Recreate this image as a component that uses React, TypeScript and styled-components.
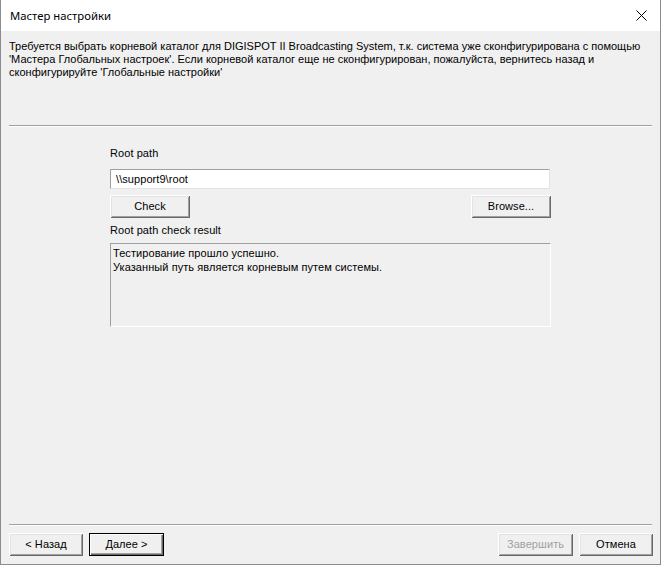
import React from "react";
import styled, { createGlobalStyle } from "styled-components";

const Global = createGlobalStyle`
  html, body { margin: 0; padding: 0; background: #ffffff; }
  * { box-sizing: border-box; }
`;

const Window = styled.div`
  width: 661px;
  height: 565px;
  border: 1px solid #8c8c8c;
  border-top: none;
  display: flex;
  flex-direction: column;
  font-family: "Liberation Sans", Arial, sans-serif;
  font-size: 11px;
  letter-spacing: 0.07px;
  color: #000;
`;

const TitleBar = styled.div`
  height: 31px;
  background: #ffffff;
  display: flex;
  align-items: center;
  justify-content: space-between;
  padding: 0 13px 1px 9px;
  font-family: "Noto Sans", "Open Sans", sans-serif;
  font-size: 11.3px;
  letter-spacing: 0;
  color: #000;
`;

const Body = styled.div`
  flex: 1;
  background: #f0f0f0;
  display: flex;
  flex-direction: column;
`;

const Description = styled.div`
  padding: 9px 8px 0 8px;
  line-height: 13px;
  height: 94px;
  font-size: 11.02px;
  letter-spacing: 0;
  white-space: nowrap;
  overflow: hidden;
`;

const Separator = styled.div<{ $inset: number }>`
  margin: 0 ${(p) => p.$inset}px;
  height: 2px;
  border-top: 1px solid #a0a0a0;
  border-bottom: 1px solid #ffffff;
`;

const Content = styled.div`
  width: 441px;
  align-self: center;
  display: flex;
  flex-direction: column;
  padding-top: 20px;
`;

const Label = styled.div<{ $mt?: number }>`
  line-height: 13px;
  margin-top: ${(p) => p.$mt ?? 0}px;
`;

const PathInput = styled.div`
  margin-top: 9px;
  width: 440px;
  height: 20px;
  background: #fff;
  border: 1px solid;
  border-color: #a0a0a0 #e3e3e3 #e3e3e3 #a0a0a0;
  padding: 0 5px;
  display: flex;
  align-items: center;
`;

const ButtonRow = styled.div<{ $mt?: number }>`
  display: flex;
  justify-content: space-between;
  align-items: center;
  margin-top: ${(p) => p.$mt ?? 0}px;
`;

const Group = styled.div`
  display: flex;
  gap: 6px;
`;

const Button = styled.div<{ $w: number; $default?: boolean; $disabled?: boolean }>`
  width: ${(p) => p.$w}px;
  height: 23px;
  background: #f0f0f0;
  display: flex;
  align-items: center;
  justify-content: center;
  color: ${(p) => (p.$disabled ? "#a0a0a0" : "#000")};
  border: ${(p) => (p.$default ? "1px solid #000" : "none")};
  box-shadow: ${(p) =>
    p.$default
      ? "inset 1px 1px 0 #ffffff, inset -1px -1px 0 #696969, inset -2px -2px 0 #a0a0a0"
      : "inset 1px 1px 0 #ffffff, inset -1px -1px 0 #696969, inset 2px 2px 0 #e3e3e3, inset -2px -2px 0 #a0a0a0"};
  padding-bottom: 1px;
`;

const ResultBox = styled.div`
  margin-top: 6px;
  width: 441px;
  height: 84px;
  border: 1px solid;
  border-color: #a0a0a0 #ffffff #ffffff #a0a0a0;
  padding: 2px 2px;
  line-height: 14px;
`;

const Spacer = styled.div`
  flex: 1;
`;

const Footer = styled.div`
  display: flex;
  justify-content: space-between;
  padding: 7px 7px 8px 8px;
`;

const CloseIcon = () => (
  <svg width="11" height="11" viewBox="0 0 11 11">
    <path d="M0.5 0.5 L10.5 10.5 M10.5 0.5 L0.5 10.5" stroke="#000" strokeWidth="1" fill="none" />
  </svg>
);

export default function App() {
  return (
    <>
      <Global />
      <Window>
        <TitleBar>
          <span>Мастер настройки</span>
          <CloseIcon />
        </TitleBar>
        <Body>
          <Description>
            Требуется выбрать корневой каталог для DIGISPOT II Broadcasting System, т.к. система уже сконфигурирована с помощью
            <br />
            'Мастера Глобальных настроек'. Если корневой каталог еще не сконфигурирован, пожалуйста, вернитесь назад и
            <br />
            сконфигурируйте 'Глобальные настройки'
          </Description>
          <Separator $inset={8} />
          <Content>
            <Label>Root path</Label>
            <PathInput>\\support9\root</PathInput>
            <ButtonRow $mt={6}>
              <Button $w={80}>Check</Button>
              <Button $w={80}>Browse...</Button>
            </ButtonRow>
            <Label $mt={6}>Root path check result</Label>
            <ResultBox>
              Тестирование прошло успешно.
              <br />
              Указанный путь является корневым путем системы.
            </ResultBox>
          </Content>
          <Spacer />
          <Separator $inset={8} />
          <Footer>
            <Group>
              <Button $w={74}>&lt; Назад</Button>
              <Button $w={75} $default>
                Далее &gt;
              </Button>
            </Group>
            <Group>
              <Button $w={75} $disabled>
                Завершить
              </Button>
              <Button $w={74}>Отмена</Button>
            </Group>
          </Footer>
        </Body>
      </Window>
    </>
  );
}
